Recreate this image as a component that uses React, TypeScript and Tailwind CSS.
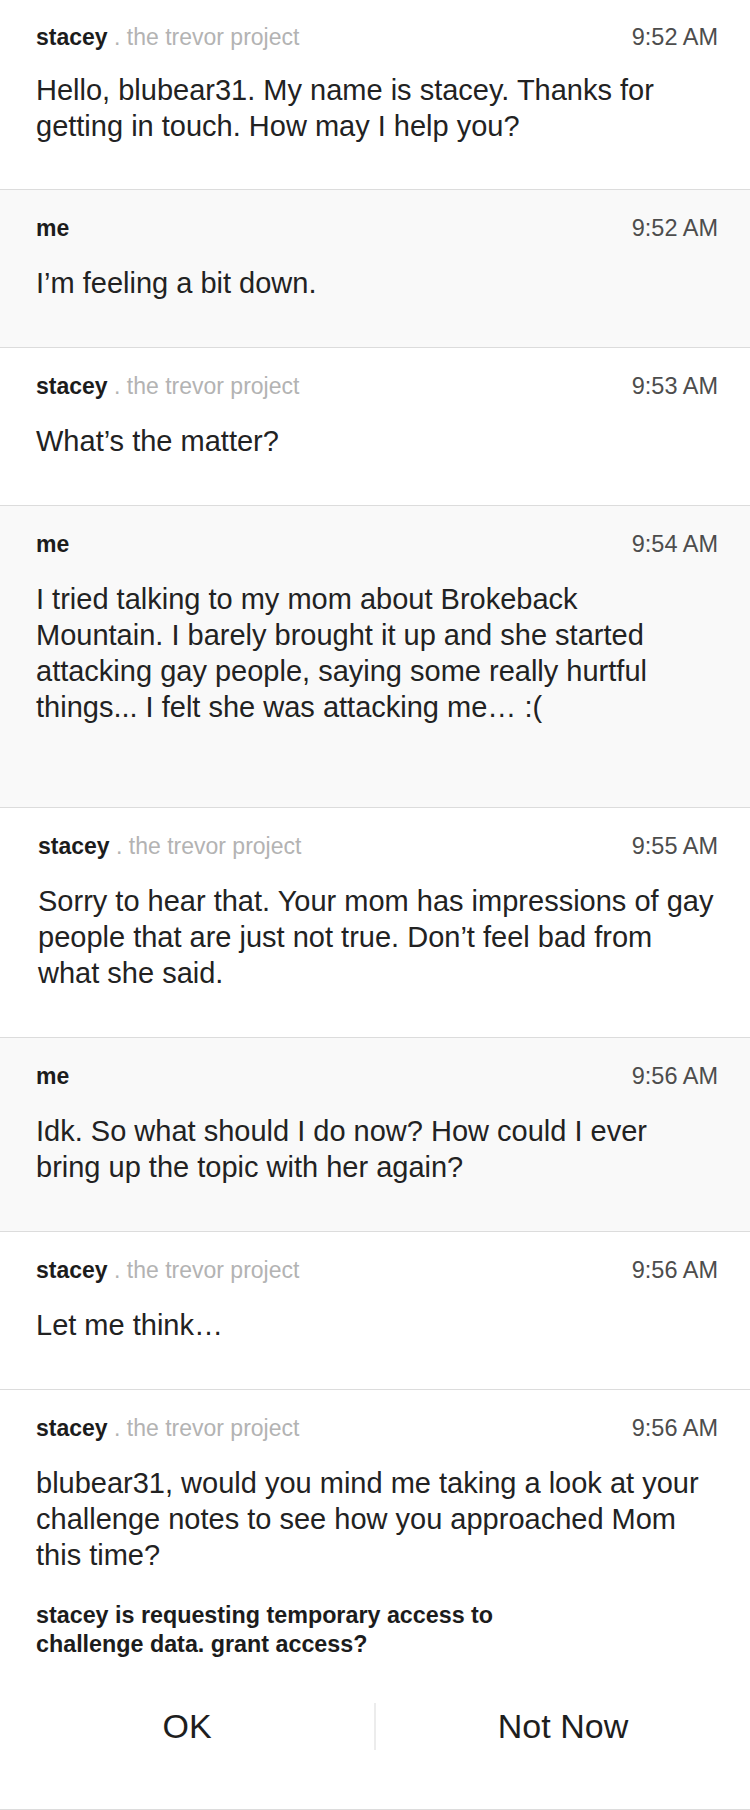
import React from 'react';

type Msg = {
    from: 'stacey' | 'me';
    time: string;
    lines: string[];
    className?: string;
};

// lines are split the way the reference wraps them
const messages: Msg[] = [
    { from: 'stacey', time: '9:52 AM', lines: ['Hello, blubear31. My name is stacey. Thanks for', 'getting in touch. How may I help you?'], className: 'pt-[23px] pb-[45px]' },
    { from: 'me', time: '9:52 AM', lines: ['I\u2019m feeling a bit down.'] },
    { from: 'stacey', time: '9:53 AM', lines: ['What\u2019s the matter?'] },
    {
        from: 'me', time: '9:54 AM',
        lines: [
            'I tried talking to my mom about Brokeback',
            'Mountain. I barely brought it up and she started',
            'attacking gay people, saying some really hurtful',
            'things... I felt she was attacking me\u2026 :(',
        ],
        className: 'pt-[24px] pb-[82px]',
    },
    {
        from: 'stacey', time: '9:55 AM',
        lines: [
            'Sorry to hear that. Your mom has impressions of gay',
            'people that are just not true. Don\u2019t feel bad from',
            'what she said.',
        ],
        className: 'pt-[24px] pb-[46px] pl-[38px] pr-[30px]',
    },
    { from: 'me', time: '9:56 AM', lines: ['Idk. So what should I do now? How could I ever', 'bring up the topic with her again?'] },
    { from: 'stacey', time: '9:56 AM', lines: ['Let me think\u2026'] },
];

function Header({ from, time }: { from: Msg['from']; time: string }) {
    return (
        <div className="flex items-center justify-between h-[28px] leading-[28px] text-[23px]">
            <div>
                <span className="font-bold text-[#1c1c1c]">{from}</span>
                {from === 'stacey' && <span className="text-[#b3b3b3]"> . the trevor project</span>}
            </div>
            <span className="text-[23.5px] text-[#4d4d4d]">{time}</span>
        </div>
    );
}

function Body({ lines, first }: { lines: string[]; first?: boolean }) {
    return (
        <p className={`${first ? 'mt-[21px]' : 'mt-[23px]'} text-[29px] leading-[36px] text-[#222222] whitespace-nowrap`}>
            {lines.map((l, i) => (
                <span key={i} className="block">{l}</span>
            ))}
        </p>
    );
}

function Message({ msg, first }: { msg: Msg; first?: boolean }) {
    const bg = msg.from === 'me' ? 'bg-[#f9f9f9]' : 'bg-white';
    return (
        <div className={`${bg} border-b border-[#dcdcdc] pl-[36px] pr-[32px] ${msg.className ?? 'pt-[24px] pb-[46px]'}`}>
            <Header from={msg.from} time={msg.time} />
            <Body lines={msg.lines} first={first} />
        </div>
    );
}

export default function App() {
    return (
        <div className="w-[750px] min-h-[1810px] bg-white" style={{ fontFamily: '"Liberation Sans", Arial, sans-serif' }}>
            {messages.map((m, i) => (
                <Message key={i} msg={m} first={i === 0} />
            ))}

            {/* Access request */}
            <div className="bg-white border-b border-[#dcdcdc] pt-[24px] pb-[59px]">
                <div className="pl-[36px] pr-[32px]">
                    <Header from="stacey" time="9:56 AM" />
                    <Body
                        lines={[
                            'blubear31, would you mind me taking a look at your',
                            'challenge notes to see how you approached Mom',
                            'this time?',
                        ]}
                    />
                    <p className="mt-[28px] text-[23.3px] leading-[29px] font-bold text-[#1c1c1c]">
                        stacey is requesting temporary access to
                        <br />
                        challenge data. grant access?
                    </p>
                </div>
                <div className="mt-[44px] flex items-center h-[47px]">
                    <button className="flex-1 text-center text-[34px] text-[#1e1e1e]">OK</button>
                    <div className="w-[2px] h-[47px] bg-[#ececec]" />
                    <button className="flex-1 text-center text-[34px] text-[#1e1e1e]">Not Now</button>
                </div>
            </div>
        </div>
    );
}
